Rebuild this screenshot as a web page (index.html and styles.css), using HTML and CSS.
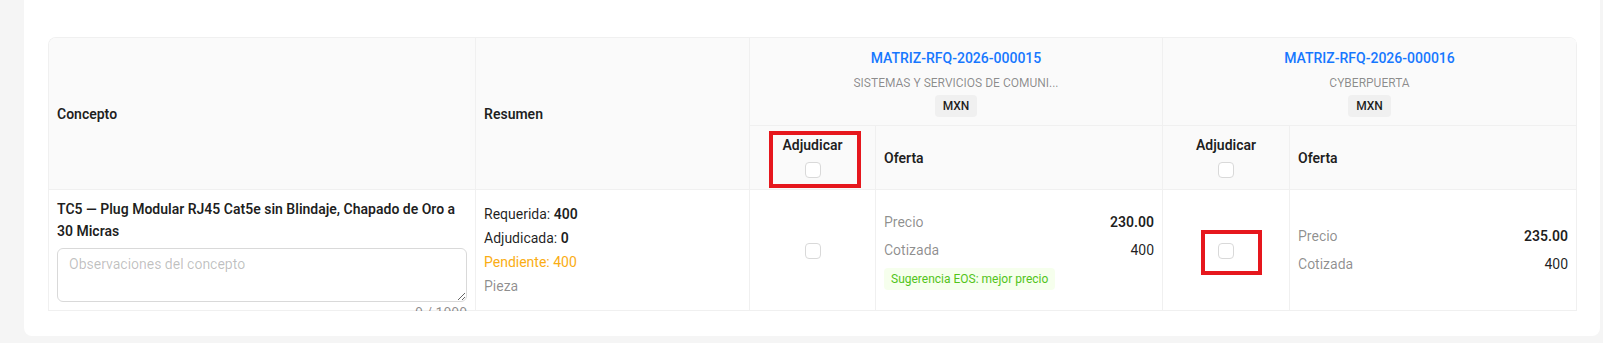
FILE: index.html
```html
<!DOCTYPE html>
<html lang="es">
<head>
<meta charset="utf-8">
<title>Matriz RFQ</title>
<link rel="stylesheet" href="styles.css">
</head>
<body>
<div class="card">
  <div class="tbl-wrap">
    <table class="matrix">
      <colgroup>
        <col class="c-concept"><col class="c-sum"><col class="c-adj1"><col class="c-of1"><col class="c-adj2"><col class="c-of2">
      </colgroup>
      <thead>
        <tr>
          <th rowspan="2" class="th-left">Concepto</th>
          <th rowspan="2" class="th-left">Resumen</th>
          <th colspan="2" class="th-vendor">
            <div class="vendor">
              <a class="vendor-link" href="#">MATRIZ-RFQ-2026-000015</a>
              <div class="vendor-name">SISTEMAS Y SERVICIOS DE COMUNI...</div>
              <span class="tag-cur">MXN</span>
            </div>
          </th>
          <th colspan="2" class="th-vendor">
            <div class="vendor">
              <a class="vendor-link" href="#">MATRIZ-RFQ-2026-000016</a>
              <div class="vendor-name">CYBERPUERTA</div>
              <span class="tag-cur">MXN</span>
            </div>
          </th>
        </tr>
        <tr>
          <th class="th-adj">
            <div class="adj-head">
              <span>Adjudicar</span>
              <span class="checkbox"></span>
              <span class="mark mark-head"></span>
            </div>
          </th>
          <th class="th-left">Oferta</th>
          <th class="th-adj">
            <div class="adj-head">
              <span>Adjudicar</span>
              <span class="checkbox"></span>
            </div>
          </th>
          <th class="th-left">Oferta</th>
        </tr>
      </thead>
      <tbody>
        <tr>
          <td class="td-concept">
            <div class="concept-title">TC5 — Plug Modular RJ45 Cat5e sin Blindaje, Chapado de Oro a 30 Micras</div>
            <div class="ta-wrap">
              <textarea class="ta" placeholder="Observaciones del concepto"></textarea>
              <span class="ta-count">0 / 1000</span>
            </div>
          </td>
          <td class="td-sum">
            <div class="sum-line">Requerida: <b>400</b></div>
            <div class="sum-line">Adjudicada: <b>0</b></div>
            <div class="sum-line pending">Pendiente: 400</div>
            <div class="sum-line muted">Pieza</div>
          </td>
          <td class="td-adj"><span class="checkbox"></span></td>
          <td class="td-offer">
            <div class="offer">
              <div class="offer-row"><span class="muted">Precio</span><b>230.00</b></div>
              <div class="offer-row"><span class="muted">Cotizada</span><span>400</span></div>
              <div><span class="tag-ok">Sugerencia EOS: mejor precio</span></div>
            </div>
          </td>
          <td class="td-adj td-adj-mark"><span class="checkbox"></span><span class="mark mark-cell"></span></td>
          <td class="td-offer">
            <div class="offer">
              <div class="offer-row"><span class="muted">Precio</span><b>235.00</b></div>
              <div class="offer-row"><span class="muted">Cotizada</span><span>400</span></div>
            </div>
          </td>
        </tr>
      </tbody>
    </table>
  </div>
</div>
</body>
</html>
```
FILE: styles.css
```css
* { box-sizing: border-box; }
html, body { margin: 0; padding: 0; }
body {
  background: #f5f5f5;
  font-family: Roboto, "Noto Sans", "Liberation Sans", sans-serif;
  font-size: 14px;
  line-height: 22px;
  color: rgba(0, 0, 0, 0.88);
  width: 1603px;
  height: 343px;
  overflow: hidden;
  padding: 0 3px 8px 24px;
}
.card {
  background: #fff;
  border-radius: 0 0 8px 8px;
  padding: 37px 23px 25px 24px;
}
.tbl-wrap {
  border-top: 1px solid #f0f0f0;
  border-left: 1px solid #f0f0f0;
  border-radius: 8px 8px 0 0;
  overflow: hidden;
  width: 1529px;
}
.matrix {
  border-collapse: separate;
  border-spacing: 0;
  table-layout: fixed;
  width: 1528px;
}
.c-concept { width: 427px; }
.c-sum { width: 274px; }
.c-adj1 { width: 126px; }
.c-of1 { width: 287px; }
.c-adj2 { width: 127px; }
.c-of2 { width: 287px; }
.matrix th, .matrix td {
  border-right: 1px solid #f0f0f0;
  border-bottom: 1px solid #f0f0f0;
  padding: 8px;
  vertical-align: middle;
}
.matrix th {
  background: #fafafa;
  font-weight: 600;
  text-align: left;
}
.th-vendor { text-align: center !important; padding: 9px 8px 8px !important; }
.vendor { display: flex; flex-direction: column; align-items: center; }
.vendor-link {
  color: #1677ff;
  text-decoration: none;
  font-weight: 500;
  font-size: 14px;
  line-height: 22px;
}
.vendor-name {
  color: rgba(0, 0, 0, 0.45);
  font-weight: 400;
  font-size: 12px;
  line-height: 20px;
  margin-top: 4px;
}
.tag-cur {
  display: inline-block;
  margin-top: 2px;
  background: #f0f0f0;
  border-radius: 4px;
  font-size: 12px;
  font-weight: 500;
  line-height: 22px;
  padding: 0 8px;
}
.th-adj { text-align: center !important; padding: 8px 8px 11px !important; }
.adj-head {
  position: relative;
  display: flex;
  flex-direction: column;
  align-items: center;
  gap: 6px;
}
.checkbox {
  display: inline-block;
  width: 16px;
  height: 16px;
  border: 1px solid #d9d9d9;
  border-radius: 4px;
  background: #fff;
}
.mark {
  position: absolute;
  border: 4px solid #e6171d;
  pointer-events: none;
}
.mark-head { left: 11px; top: -3px; width: 92px; height: 57px; }
.td-adj { text-align: center; position: relative; }
.td-adj .checkbox { vertical-align: middle; }
.mark-cell { left: 38px; top: 40px; width: 61px; height: 45px; }
.concept-title { font-weight: 600; line-height: 22px; }
.ta-wrap { position: relative; margin-top: 6px; }
.ta {
  display: block;
  width: 100%;
  height: 54px;
  resize: vertical;
  border: 1px solid #d9d9d9;
  border-radius: 6px;
  padding: 4px 11px;
  font: inherit;
  font-size: 14px;
  line-height: 22px;
  color: rgba(0, 0, 0, 0.88);
}
.ta::placeholder { color: rgba(0, 0, 0, 0.25); }
.ta-count {
  position: absolute;
  right: 0;
  top: 100%;
  color: rgba(0, 0, 0, 0.45);
  line-height: 22px;
  white-space: nowrap;
}
.sum-line { line-height: 24px; }
.sum-line b { font-weight: 600; }
.pending { color: #faad14; }
.muted { color: rgba(0, 0, 0, 0.45); }
.offer { display: flex; flex-direction: column; gap: 6px; }
.offer-row { display: flex; justify-content: space-between; line-height: 22px; }
.offer-row b { font-weight: 600; }
.tag-ok {
  display: inline-block;
  background: #f6ffed;
  color: #52c41a;
  font-size: 12px;
  line-height: 22px;
  padding: 0 7px;
  border-radius: 4px;
}
```
